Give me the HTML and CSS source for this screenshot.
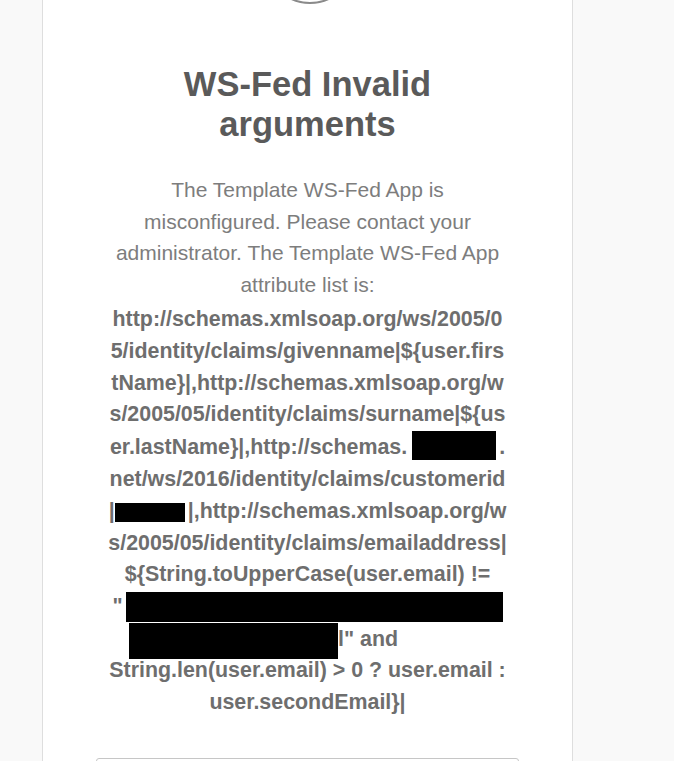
FILE: index.html
```html
<!DOCTYPE html>
<html lang="en">
<head>
<meta charset="utf-8">
<title>WS-Fed Invalid arguments</title>
<link rel="stylesheet" href="styles.css">
</head>
<body>
<main class="card">
  <div class="beacon"></div>
  <h1 class="title">WS-Fed Invalid arguments</h1>
  <div class="msg">
    <p class="plain">The Template WS-Fed App is misconfigured. Please contact your administrator. The Template WS-Fed App attribute list is:</p>
    <div class="attrs">
      <span class="ln">http://schemas.xmlsoap.org/ws/2005/0</span>
      <span class="ln">5/identity/claims/givenname|${user.firs</span>
      <span class="ln">tName}|,http://schemas.xmlsoap.org/w</span>
      <span class="ln">s/2005/05/identity/claims/surname|${us</span>
      <span class="ln">er.lastName}|,http://schemas.<span class="redact r-a"></span>.</span>
      <span class="ln">net/ws/2016/identity/claims/customerid</span>
      <span class="ln">|<span class="redact r-b"></span>|,http://schemas.xmlsoap.org/w</span>
      <span class="ln">s/2005/05/identity/claims/emailaddress|</span>
      <span class="ln">${String.toUpperCase(user.email) !=</span>
      <span class="ln">"<span class="redact r-c"></span></span>
      <span class="ln"><span class="redact r-d"></span>l" and</span>
      <span class="ln">String.len(user.email) &gt; 0 ? user.email :</span>
      <span class="ln">user.secondEmail}|</span>
    </div>
  </div>
  <div class="field"></div>
</main>
</body>
</html>
```
FILE: styles.css
```css
html, body {
  margin: 0;
  padding: 0;
  background: #f9f9f9;
  height: 100%;
  overflow: hidden;
}

body {
  font-family: "Liberation Sans", Arial, sans-serif;
}

.card {
  box-sizing: border-box;
  width: 531px;
  margin-left: 42px;
  min-height: 100%;
  background: #ffffff;
  border-left: 1px solid #dedede;
  border-right: 1px solid #dedede;
  padding: 0 53px;
  display: flex;
  flex-direction: column;
}

.beacon {
  box-sizing: border-box;
  width: 90px;
  height: 90px;
  margin: -86px auto 0;
  border: 2px solid #8a8a8a;
  border-radius: 50%;
  align-self: center;
  position: relative;
  left: 2px;
}

.title {
  margin: 60px 0 0;
  font-size: 34.5px;
  line-height: 40px;
  font-weight: bold;
  color: #5a5a5a;
  text-align: center;
}

.msg {
  margin: 30px 0 0;
  text-align: center;
  font-size: 21px;
  line-height: 31.6px;
}

.plain {
  margin: 0 14px;
  color: #7d7d7d;
}

.attrs {
  margin-top: 4px;
  font-size: 21.4px;
  font-weight: bold;
  color: #6e6e6e;
  line-height: 31.7px;
}

.ln {
  display: block;
  white-space: nowrap;
}

.redact {
  display: inline-block;
  background: #000000;
}

.r-a {
  width: 84px;
  height: 29px;
  margin: 0 3px 0 5px;
  vertical-align: -5.7px;
}

.r-b {
  width: 70px;
  height: 19px;
  margin: 0 3px 0 0;
  vertical-align: -4px;
}

.r-c {
  width: 377px;
  height: 30px;
  margin: 0 0 -2px 3px;
  vertical-align: -7px;
}

.r-d {
  width: 209px;
  height: 36px;
  margin: 0 0 -6px -88px;
  vertical-align: -7.5px;
}

.field {
  margin-top: 40px;
  height: 40px;
  border: 1px solid #c6c6c6;
  border-radius: 3px;
  flex-shrink: 0;
}
```
